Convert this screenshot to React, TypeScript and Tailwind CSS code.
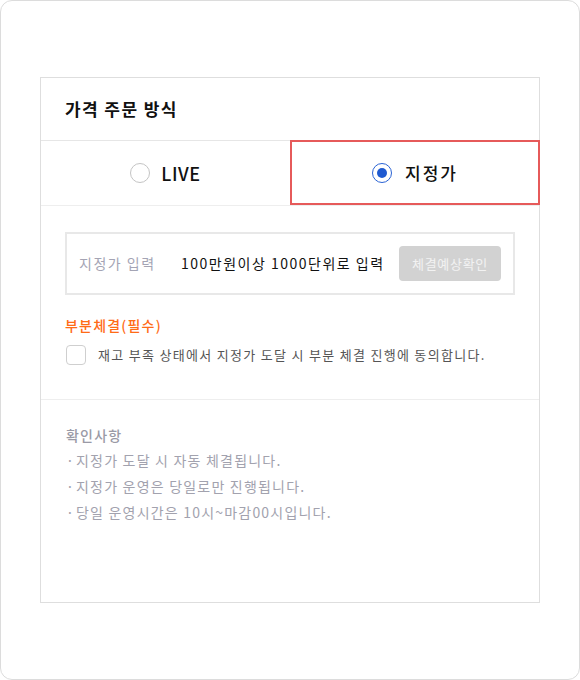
import { useState } from "react";

const font = { fontFamily: '"Noto Sans CJK KR", "Noto Sans", sans-serif' };

function Radio({ checked }: { checked: boolean }) {
  return (
    <span
      className={`flex h-[20px] w-[20px] items-center justify-center rounded-full border-[1.5px] ${
        checked ? "border-[#2a63d4]" : "border-[#c4c4c4]"
      }`}
    >
      {checked && <span className="h-[10px] w-[10px] rounded-full bg-[#1f5ad0]" />}
    </span>
  );
}

const notices = [
  "지정가 도달 시 자동 체결됩니다.",
  "지정가 운영은 당일로만 진행됩니다.",
  "당일 운영시간은 10시~마감00시입니다.",
];

export default function App() {
  const [mode, setMode] = useState<"live" | "limit">("limit");
  const [agree, setAgree] = useState(false);

  return (
    <div style={font} className="h-[680px] w-[580px] rounded-[12px] border border-[#dcdcdc] bg-white pl-[39px] pt-[76px]">
      <div className="flex h-[526px] w-[500px] flex-col border border-[#dedede]">
        <div className="flex h-[63px] items-center border-b border-[#e6e6e6] px-[24px]">
          <h2 className="text-[17px] font-bold tracking-[1.4px] text-[#111]">가격 주문 방식</h2>
        </div>

        <div className="grid h-[65px] grid-cols-2 border-b border-[#eeeeee]">
          <button
            onClick={() => setMode("live")}
            className="flex items-center justify-center gap-[11px]"
          >
            <Radio checked={mode === "live"} />
            <span className="text-[18px] font-medium tracking-[0.6px] text-[#111]">LIVE</span>
          </button>
          <button
            onClick={() => setMode("limit")}
            className={`-mr-px -mt-px flex items-center justify-center gap-[13px] ${
              mode === "limit" ? "border-2 border-[#e65a5a]" : ""
            }`}
          >
            <Radio checked={mode === "limit"} />
            <span className="text-[17px] font-medium tracking-[2px] text-[#111]">지정가</span>
          </button>
        </div>

        <div className="border-b border-[#eeeeee] px-[24px] pb-[34px] pt-[26px]">
          <div className="flex h-[63px] items-center border-2 border-[#e8e8e8] pl-[12px] pr-[12px]">
            <span className="w-[102px] text-[14px] tracking-[1.5px] text-[#a4a4b4]">지정가 입력</span>
            <span className="flex-1 text-[14px] tracking-[1.5px] text-[#111]">100만원이상 1000단위로 입력</span>
            <button className="h-[35px] w-[102px] rounded-[4px] bg-[#d2d2d2] text-[13px] tracking-[0.7px] text-[#f2f2f2]">
              체결예상확인
            </button>
          </div>

          <p className="mt-[20px] text-[14px] font-medium tracking-[1.2px] text-[#ff6b17]">부분체결(필수)</p>
          <label className="mt-[9px] flex items-center gap-[12px]">
            <span
              onClick={() => setAgree(!agree)}
              className={`ml-px h-[20px] w-[20px] rounded-[4px] border ${
                agree ? "border-[#1f5ad0] bg-[#1f5ad0]" : "border-[#cfcfcf]"
              }`}
            />
            <span className="text-[13px] tracking-[1.3px] text-[#555]">
              재고 부족 상태에서 지정가 도달 시 부분 체결 진행에 동의합니다.
            </span>
          </label>
        </div>

        <div className="px-[25px] pt-[23px]">
          <p className="text-[14px] font-medium leading-[24px] tracking-[1.2px] text-[#9a9aa6]">확인사항</p>
          {notices.map((n) => (
            <p key={n} className="flex text-[14px] leading-[26px] tracking-[1.2px] text-[#a2a2ae]">
              <span className="w-[10px]">·</span>
              <span>{n}</span>
            </p>
          ))}
        </div>
      </div>
    </div>
  );
}
